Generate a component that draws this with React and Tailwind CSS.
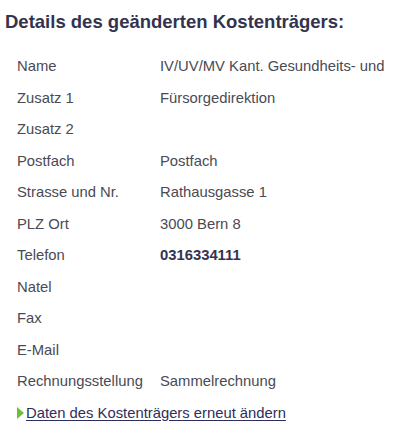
const rows = [
  ["Name", "IV/UV/MV Kant. Gesundheits- und"],
  ["Zusatz 1", "Fürsorgedirektion"],
  ["Zusatz 2", ""],
  ["Postfach", "Postfach"],
  ["Strasse und Nr.", "Rathausgasse 1"],
  ["PLZ Ort", "3000 Bern 8"],
  ["Telefon", "0316334111", true],
  ["Natel", ""],
  ["Fax", ""],
  ["E-Mail", ""],
  ["Rechnungsstellung", "Sammelrechnung"],
];

export default function App() {
  return (
    <div className="w-[400px] h-[441px] bg-white overflow-hidden font-['Liberation_Sans',Arial,sans-serif] text-[#4a4a55]">
      <h2 className="pl-[5px] pt-[11px] text-[18.5px] leading-[22px] font-bold text-[#33334f]">
        Details des geänderten Kostenträgers:
      </h2>

      <div className="mt-[25px] pl-[17px]">
        {rows.map(([label, value, bold]) => (
          <div key={label} className="flex h-[31.5px] text-[14.8px] leading-[17px]">
            <div className="w-[143px] shrink-0">{label}</div>
            <div className={bold ? "font-bold text-[#33334f]" : ""}>{value}</div>
          </div>
        ))}

        <a href="#" className="flex items-center text-[14.8px] leading-[17px] text-[#2e2e5a]">
          <span className="w-0 h-0 border-y-[6px] border-y-transparent border-l-[7px] border-l-[#6fbf3a] mr-[2px]"></span>
          <span className="underline underline-offset-2">Daten des Kostenträgers erneut ändern</span>
        </a>
      </div>
    </div>
  );
}
